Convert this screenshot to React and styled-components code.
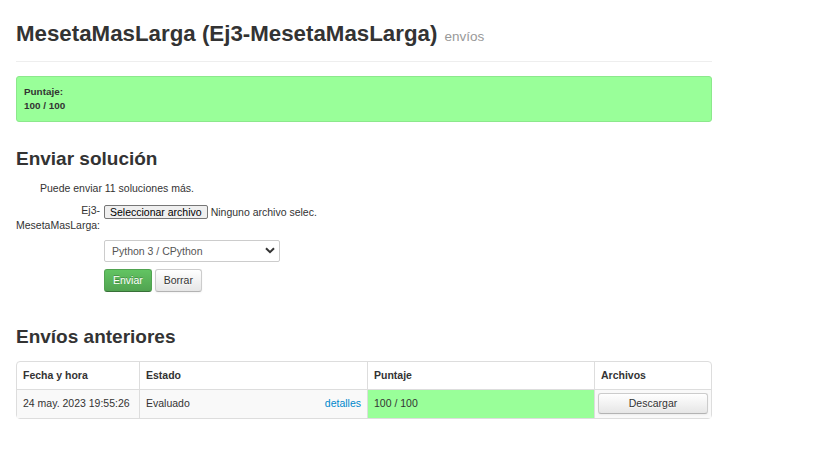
import React from "react";
import styled, { createGlobalStyle } from "styled-components";

const Global = createGlobalStyle`
  html, body { margin: 0; padding: 0; background: #fff; }
  body {
    font-family: "Liberation Sans", Arial, sans-serif;
    font-size: 10.5px;
    line-height: 15px;
    color: #333;
  }
`;

const Page = styled.div`
  width: 696px;
  margin-left: 16px;
`;

const PageHeader = styled.div`
  padding-top: 19px;
  padding-bottom: 9px;
  border-bottom: 1px solid #eee;
`;

const Title = styled.h1`
  margin: 0;
  font-size: 22.3px;
  line-height: 30px;
  font-weight: bold;
  color: #333;
`;

const Small = styled.small`
  font-size: 13.5px;
  font-weight: normal;
  color: #999;
  margin-left: 1px;
`;

const Alert = styled.div`
  margin-top: 14px;
  padding: 8px 7px 9px;
  background: #99ff99;
  border: 1px solid #8ce88c;
  border-radius: 3px;
  font-size: 9.9px;
  line-height: 13.5px;
  font-weight: bold;
  color: #333;
`;

const SectionTitle = styled.h2`
  margin: ${(p) => p.$top}px 0 0;
  font-size: 19px;
  line-height: 24px;
  font-weight: bold;
  color: #333;
`;

const Note = styled.p`
  margin: 10px 0 0 24px;
`;

const FormRow = styled.div`
  display: grid;
  grid-template-columns: 84px 1fr;
  column-gap: 4px;
  margin-top: 7px;
`;

const Label = styled.label`
  text-align: right;
  font-size: 10.5px;
  line-height: 15px;
  color: #333;
`;

const Controls = styled.div`
  display: flex;
  flex-direction: column;
  align-items: flex-start;
  padding-top: 2px;
`;

const FileRow = styled.div`
  display: flex;
  align-items: center;
  gap: 3px;
  height: 14px;
`;

const FileButton = styled.span`
  display: inline-block;
  box-sizing: border-box;
  height: 14px;
  padding: 0 5px;
  border: 1px solid #767676;
  border-radius: 2px;
  background: #efefef;
  line-height: 12px;
  color: #000;
`;

const FileText = styled.span`
  color: #333;
  line-height: 14px;
`;

const SelectWrap = styled.div`
  position: relative;
  margin-top: 21px;
  width: 176px;
`;

const Select = styled.select`
  appearance: none;
  -webkit-appearance: none;
  box-sizing: border-box;
  width: 176px;
  height: 22px;
  margin: 0;
  padding: 0 20px 0 7px;
  border: 1px solid #ccc;
  border-radius: 2px;
  background: #fff;
  font-family: "Liberation Sans", Arial, sans-serif;
  font-size: 10.5px;
  color: #555;
`;

const Chevron = styled.svg`
  position: absolute;
  right: 5px;
  top: 7px;
  pointer-events: none;
`;

const Buttons = styled.div`
  display: flex;
  gap: 3px;
  margin-top: 7px;
`;

const Button = styled.button`
  box-sizing: border-box;
  height: 23px;
  padding: 0 8px;
  font-family: "Liberation Sans", Arial, sans-serif;
  font-size: 10.5px;
  line-height: 15px;
  border-radius: 3px;
  cursor: pointer;
  border: 1px solid;
  ${(p) =>
    p.$variant === "success"
      ? `
    color: #fff;
    text-shadow: 0 -1px 0 rgba(0,0,0,0.25);
    background: linear-gradient(#62c462, #51a351);
    border-color: #51a351 #51a351 #387038;
  `
      : `
    color: #333;
    text-shadow: 0 1px 1px rgba(255,255,255,0.75);
    background: linear-gradient(#ffffff, #e6e6e6);
    border-color: #cccccc #cccccc #b3b3b3;
    box-shadow: inset 0 1px 0 rgba(255,255,255,0.2), 0 1px 2px rgba(0,0,0,0.05);
  `}
`;

const Table = styled.table`
  margin-top: 12px;
  width: 696px;
  table-layout: fixed;
  border-collapse: separate;
  border-spacing: 0;
  border: 1px solid #ddd;
  border-radius: 4px;
  font-size: 10.5px;
`;

const Th = styled.th`
  text-align: left;
  font-weight: bold;
  padding: 6px 6px;
  line-height: 15px;
  border-left: ${(p) => (p.$first ? "none" : "1px solid #ddd")};
  color: #333;
`;

const Td = styled.td`
  padding: ${(p) => (p.$btn ? "3px 3px 4px 3px" : "6px 6px 7px")};
  line-height: 15px;
  border-top: 1px solid #ddd;
  border-left: ${(p) => (p.$first ? "none" : "1px solid #ddd")};
  background: ${(p) => (p.$ok ? "#99ff99" : "#f9f9f9")};
  color: #333;
  vertical-align: middle;
`;

const StateCell = styled.div`
  display: flex;
  justify-content: space-between;
`;

const Link = styled.a`
  color: #0088cc;
  text-decoration: none;
`;

const DownloadButton = styled(Button)`
  width: 100%;
  height: 21px;
  padding: 0;
`;

export default function App() {
  return (
    <>
      <Global />
      <Page>
        <PageHeader>
          <Title>
            MesetaMasLarga (Ej3-MesetaMasLarga) <Small>envíos</Small>
          </Title>
        </PageHeader>

        <Alert>
          Puntaje:
          <br />
          100 / 100
        </Alert>

        <SectionTitle $top={25}>Enviar solución</SectionTitle>
        <Note>Puede enviar 11 soluciones más.</Note>

        <FormRow>
          <Label>Ej3-MesetaMasLarga:</Label>
          <Controls>
            <FileRow>
              <FileButton>Seleccionar archivo</FileButton>
              <FileText>Ninguno archivo selec.</FileText>
            </FileRow>
            <SelectWrap>
              <Select defaultValue="py3">
                <option value="py3">Python 3 / CPython</option>
              </Select>
              <Chevron width="10" height="7" viewBox="0 0 10 7">
                <path d="M1 1.2 L5 5.2 L9 1.2" fill="none" stroke="#333" strokeWidth="2" />
              </Chevron>
            </SelectWrap>
            <Buttons>
              <Button $variant="success">Enviar</Button>
              <Button>Borrar</Button>
            </Buttons>
          </Controls>
        </FormRow>

        <SectionTitle $top={33}>Envíos anteriores</SectionTitle>

        <Table>
          <colgroup>
            <col style={{ width: 122 }} />
            <col style={{ width: 228 }} />
            <col style={{ width: 227 }} />
            <col />
          </colgroup>
          <thead>
            <tr>
              <Th $first>Fecha y hora</Th>
              <Th>Estado</Th>
              <Th>Puntaje</Th>
              <Th>Archivos</Th>
            </tr>
          </thead>
          <tbody>
            <tr>
              <Td $first>24 may. 2023 19:55:26</Td>
              <Td>
                <StateCell>
                  <span>Evaluado</span>
                  <Link href="#">detalles</Link>
                </StateCell>
              </Td>
              <Td $ok>100 / 100</Td>
              <Td $btn>
                <DownloadButton>Descargar</DownloadButton>
              </Td>
            </tr>
          </tbody>
        </Table>
      </Page>
    </>
  );
}
